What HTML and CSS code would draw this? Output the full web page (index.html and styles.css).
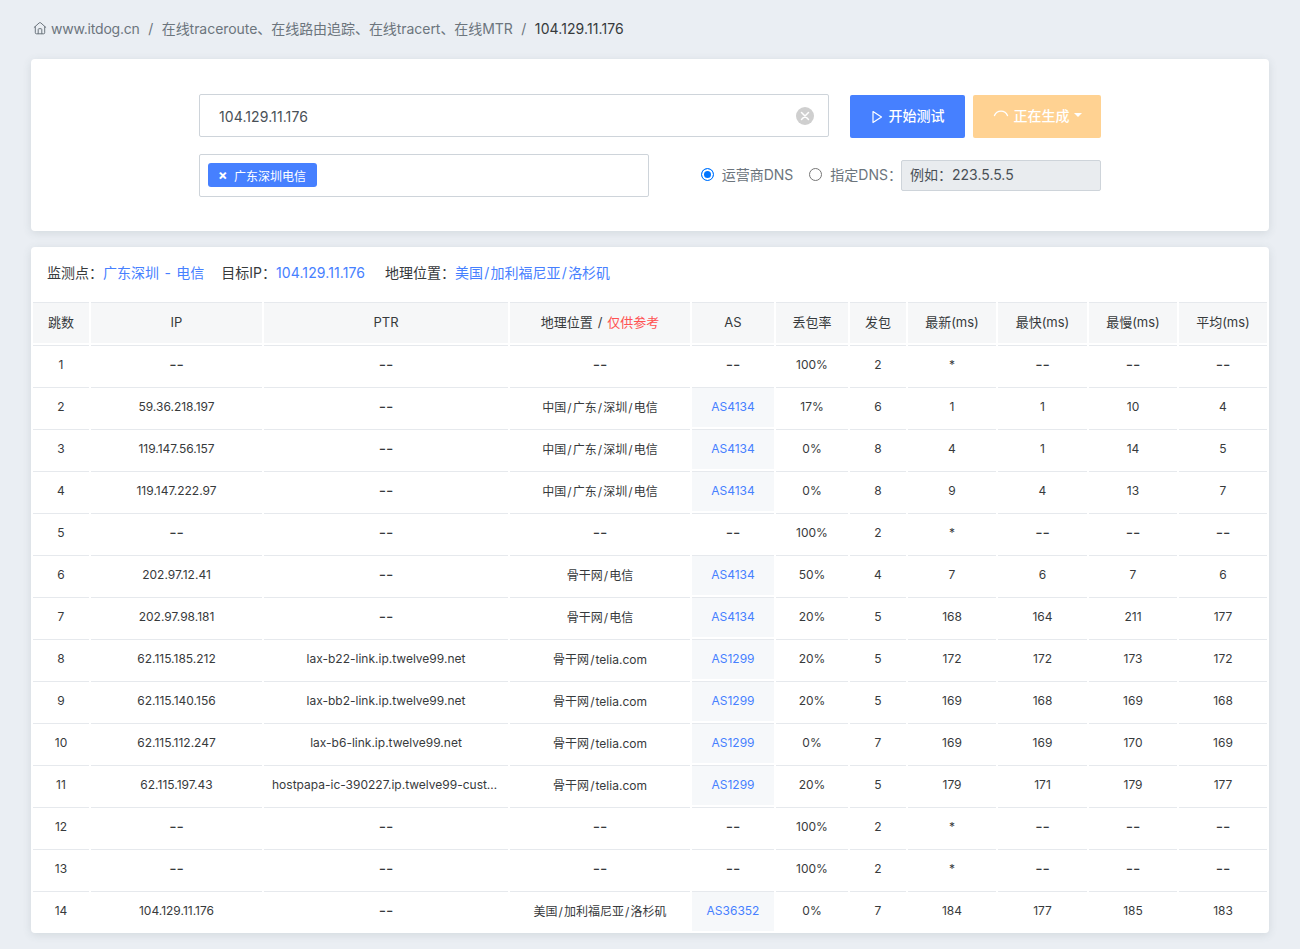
FILE: index.html
```html
<!DOCTYPE html>
<html lang="zh-CN">
<head>
<meta charset="utf-8">
<title>在线traceroute</title>
<link rel="stylesheet" href="styles.css">
</head>
<body>
<nav class="crumbs">
  <svg class="home" viewBox="0 0 14 14" width="14" height="14" fill="none" stroke="currentColor" stroke-width="1" stroke-linejoin="round" stroke-linecap="round"><path d="M1.2 6.4 6.2 1.9a1.2 1.2 0 0 1 1.6 0l5 4.5"/><path d="M2.3 5.6v6.2c0 .6.4 1 1 1h7.400c.6 0 1-.4 1-1V5.600"/><path d="M5.200 12.700V8.500c0-.5.3-.8.8-.8h2c.5 0 .8.300.8.800v4.200"/></svg>
  <span class="crumb first">www.itdog.cn</span>
  <span class="sep">/</span>
  <span class="crumb middle">在线traceroute、在线路由追踪、在线tracert、在线MTR</span>
  <span class="sep">/</span>
  <span class="crumb current">104.129.11.176</span>
</nav>

<section class="card form-card">
  <div class="form">
    <div class="form-row">
      <div class="target">
        <input class="target-input" type="text" value="104.129.11.176">
        <svg class="clear" viewBox="0 0 18 18" width="18" height="18"><circle cx="9" cy="9" r="9" fill="#cfcfcf"/><path d="M5.500 5.500l7 7M12.500 5.500l-7 7" stroke="#fff" stroke-width="1.500" stroke-linecap="round"/></svg>
      </div>
      <button class="btn btn-primary" type="button">
        <svg viewBox="0 0 12 14" width="12" height="14" fill="none" stroke="currentColor" stroke-width="1.200" stroke-linejoin="round"><path d="M2 1.500 10.500 7 2 12.500z"/></svg>
        <span class="btn-text">开始测试</span>
      </button>
      <button class="btn btn-warn" type="button">
        <svg class="spin" viewBox="0 0 16 16" width="16" height="16" fill="none" stroke="currentColor" stroke-width="1.400" stroke-linecap="round"><path d="M1.500 6.500A7 7 0 0 1 14.500 6.500"/></svg>
        <span class="btn-text">正在生成</span>
        <i class="caret"></i>
      </button>
    </div>
    <div class="form-row second">
      <div class="picker"><span class="tag"><b class="tag-x">×</b>广东深圳电信</span></div>
      <div class="dns">
        <label class="radio-label"><input class="radio" type="radio" name="dns" checked>运营商DNS</label>
        <label class="radio-label"><input class="radio" type="radio" name="dns">指定DNS：</label>
        <input class="dns-input" type="text" value="例如：223.5.5.5" disabled>
      </div>
    </div>
  </div>
</section>

<section class="card result-card">
  <div class="info">
    <span class="info-item">监测点：<a class="spaced">广东深圳 - 电信</a></span>
    <span class="info-item">目标IP：<a class="digits">104.129.11.176</a></span>
    <span class="info-item geo-item">地理位置：<a>美国<i class="sl">/</i>加利福尼亚<i class="sl">/</i>洛杉矶</a></span>
  </div>
  <table class="hops">
    <colgroup>
      <col class="c-hop"><col class="c-ip"><col class="c-ptr"><col class="c-geo"><col class="c-as"><col class="c-loss"><col class="c-sent"><col class="c-a"><col class="c-b"><col class="c-a"><col class="c-a">
    </colgroup>
    <thead>
      <tr><th>跳数</th><th>IP</th><th>PTR</th><th>地理位置 <i class="sl">/</i> <em>仅供参考</em></th><th>AS</th><th>丢包率</th><th>发包</th><th>最新(ms)</th><th>最快(ms)</th><th>最慢(ms)</th><th>平均(ms)</th></tr>
    </thead>
    <tbody>
      <tr><td>1</td><td class="none">--</td><td class="none">--</td><td class="none">--</td><td class="none">--</td><td>100%</td><td>2</td><td>*</td><td class="none">--</td><td class="none">--</td><td class="none">--</td></tr>
      <tr><td>2</td><td>59.36.218.197</td><td class="none">--</td><td>中国<i class="sl">/</i>广东<i class="sl">/</i>深圳<i class="sl">/</i>电信</td><td class="as">AS4134</td><td>17%</td><td>6</td><td>1</td><td>1</td><td>10</td><td>4</td></tr>
      <tr><td>3</td><td>119.147.56.157</td><td class="none">--</td><td>中国<i class="sl">/</i>广东<i class="sl">/</i>深圳<i class="sl">/</i>电信</td><td class="as">AS4134</td><td>0%</td><td>8</td><td>4</td><td>1</td><td>14</td><td>5</td></tr>
      <tr><td>4</td><td>119.147.222.97</td><td class="none">--</td><td>中国<i class="sl">/</i>广东<i class="sl">/</i>深圳<i class="sl">/</i>电信</td><td class="as">AS4134</td><td>0%</td><td>8</td><td>9</td><td>4</td><td>13</td><td>7</td></tr>
      <tr><td>5</td><td class="none">--</td><td class="none">--</td><td class="none">--</td><td class="none">--</td><td>100%</td><td>2</td><td>*</td><td class="none">--</td><td class="none">--</td><td class="none">--</td></tr>
      <tr><td>6</td><td>202.97.12.41</td><td class="none">--</td><td>骨干网<i class="sl">/</i>电信</td><td class="as">AS4134</td><td>50%</td><td>4</td><td>7</td><td>6</td><td>7</td><td>6</td></tr>
      <tr><td>7</td><td>202.97.98.181</td><td class="none">--</td><td>骨干网<i class="sl">/</i>电信</td><td class="as">AS4134</td><td>20%</td><td>5</td><td>168</td><td>164</td><td>211</td><td>177</td></tr>
      <tr><td>8</td><td>62.115.185.212</td><td>lax-b22-link.ip.twelve99.net</td><td>骨干网<i class="sl">/</i>telia.com</td><td class="as">AS1299</td><td>20%</td><td>5</td><td>172</td><td>172</td><td>173</td><td>172</td></tr>
      <tr><td>9</td><td>62.115.140.156</td><td>lax-bb2-link.ip.twelve99.net</td><td>骨干网<i class="sl">/</i>telia.com</td><td class="as">AS1299</td><td>20%</td><td>5</td><td>169</td><td>168</td><td>169</td><td>168</td></tr>
      <tr><td>10</td><td>62.115.112.247</td><td>lax-b6-link.ip.twelve99.net</td><td>骨干网<i class="sl">/</i>telia.com</td><td class="as">AS1299</td><td>0%</td><td>7</td><td>169</td><td>169</td><td>170</td><td>169</td></tr>
      <tr><td>11</td><td>62.115.197.43</td><td>hostpapa-ic-390227.ip.twelve99-customer.net</td><td>骨干网<i class="sl">/</i>telia.com</td><td class="as">AS1299</td><td>20%</td><td>5</td><td>179</td><td>171</td><td>179</td><td>177</td></tr>
      <tr><td>12</td><td class="none">--</td><td class="none">--</td><td class="none">--</td><td class="none">--</td><td>100%</td><td>2</td><td>*</td><td class="none">--</td><td class="none">--</td><td class="none">--</td></tr>
      <tr><td>13</td><td class="none">--</td><td class="none">--</td><td class="none">--</td><td class="none">--</td><td>100%</td><td>2</td><td>*</td><td class="none">--</td><td class="none">--</td><td class="none">--</td></tr>
      <tr><td>14</td><td>104.129.11.176</td><td class="none">--</td><td>美国<i class="sl">/</i>加利福尼亚<i class="sl">/</i>洛杉矶</td><td class="as">AS36352</td><td>0%</td><td>7</td><td>184</td><td>177</td><td>185</td><td>183</td></tr>
    </tbody>
  </table>
</section>
</body>
</html>
```

FILE: styles.css
```css
* { box-sizing: border-box; }

html, body { margin: 0; }

body {
  background: #eaeef3;
  color: #373a3c;
  font-family: Inter, "Noto Sans CJK SC", sans-serif;
  font-size: 14px;
  padding: 0 31px 16px;
  height: 949px;
  overflow: hidden;
}

/* breadcrumb */
.crumbs {
  display: flex;
  align-items: center;
  height: 59px;
  padding: 0 0 3px 2px;
  color: #6c757d;
}
.home { flex: none; margin-right: 4px; }
.sep { margin: 0 8.5px; }
.first { letter-spacing: -.2px; }
.middle { letter-spacing: -.05px; }
.current { color: #373a3c; letter-spacing: .1px; }

/* cards */
.card {
  background: #fff;
  border-radius: 4px;
  box-shadow: 0 2px 8px rgba(69, 90, 100, .14);
}
.form-card {
  height: 172px;
  padding-top: 35px;
}
.form {
  width: 902px;
  margin: 0 auto;
}
.form-row {
  display: flex;
  align-items: flex-start;
}
.second {
  align-items: center;
  justify-content: space-between;
  margin-top: 16px;
}

.target {
  position: relative;
  flex: none;
  width: 630px;
  margin-right: 21px;
}
.target-input {
  display: block;
  width: 100%;
  height: 43px;
  padding: 1px 44px 0 19px;
  border: 1px solid #ced4da;
  border-radius: 2px;
  color: #495057;
  font: inherit;
  letter-spacing: .1px;
  outline: none;
}
.clear {
  position: absolute;
  top: 13px;
  right: 15px;
}

.btn {
  display: flex;
  align-items: center;
  justify-content: center;
  height: 43px;
  margin-top: 1px;
  border: 0;
  border-radius: 2px;
  color: #fff;
  font: inherit;
  font-weight: 500;
}
.btn-text { padding-bottom: 3px; }
.btn-primary {
  width: 115px;
  margin-right: 8px;
  background: #4680ff;
  gap: 6px;
}
.btn-warn {
  width: 128px;
  background: #ffd292;
}
.spin { margin-right: 5px; }
.caret {
  width: 0;
  height: 0;
  margin-left: 4px;
  margin-bottom: 3px;
  border-top: 4px solid #fff;
  border-left: 4px solid transparent;
  border-right: 4px solid transparent;
}

.picker {
  display: flex;
  align-items: center;
  width: 450px;
  height: 43px;
  padding: 0 0 1px 8px;
  border: 1px solid #ced4da;
  border-radius: 2px;
}
.tag {
  display: flex;
  align-items: center;
  width: 109px;
  height: 24px;
  padding-left: 10px;
  border-radius: 3px;
  background: #4680ff;
  color: #fff;
  font-size: 12px;
}
.tag-x {
  width: 16px;
  font-size: 14px;
  line-height: 1;
}

.dns {
  display: flex;
  align-items: center;
  color: #6c757d;
}
.radio-label {
  display: flex;
  align-items: center;
  margin-right: 16px;
  padding-bottom: 3px;
}
.radio-label:nth-child(2) { margin-right: -1px; }
.radio {
  appearance: none;
  width: 13px;
  height: 13px;
  margin: 0 8px 0 0;
  border: 1px solid #767676;
  border-radius: 50%;
  background: #fff;
}
.radio:checked {
  border-color: #0075ff;
  background: #0075ff;
  box-shadow: inset 0 0 0 2px #fff;
}
.dns-input {
  width: 200px;
  height: 31px;
  padding: 0 8px 3px;
  border: 1px solid #ced4da;
  border-radius: 2px;
  background: #e9ecef;
  color: #495057;
  font: inherit;
}

/* result */
.result-card {
  margin-top: 16px;
  height: 686px;
}
.info {
  display: flex;
  gap: 17px;
  height: 53px;
  padding: 16px 16px 0;
  line-height: 20px;
}
.info a { color: #4680ff; }
.spaced { word-spacing: 1.5px; }
.digits { letter-spacing: .1px; }
.geo-item { margin-left: 3px; }

.sl {
  margin: 0 .09em;
  font-style: normal;
}

.hops {
  width: 1238px;
  table-layout: fixed;
  border-collapse: separate;
  border-spacing: 2px;
  font-size: 12px;
}
.c-hop, .c-sent { width: 56px; }
.c-ip { width: 171px; }
.c-ptr { width: 244px; }
.c-geo { width: 180px; }
.c-as { width: 82px; }
.c-loss { width: 72px; }
.c-a { width: 88px; }
.c-b { width: 89px; }

th, td {
  border-top: 1px solid #e6e9ed;
  text-align: center;
  font-weight: 400;
  white-space: nowrap;
  overflow: hidden;
  text-overflow: ellipsis;
}
th {
  height: 41px;
  padding: 0 8px 3px;
  background: #f6f7f8;
  font-size: 13px;
}
th em {
  color: #ff5252;
  font-style: normal;
}
td {
  height: 40px;
  padding: 0 8px 2px;
}
td.none {
  padding-bottom: 4px;
  font-size: 16px;
  line-height: 16px;
}
.as {
  background: #f6f8fa;
  color: #4680ff;
}
```
